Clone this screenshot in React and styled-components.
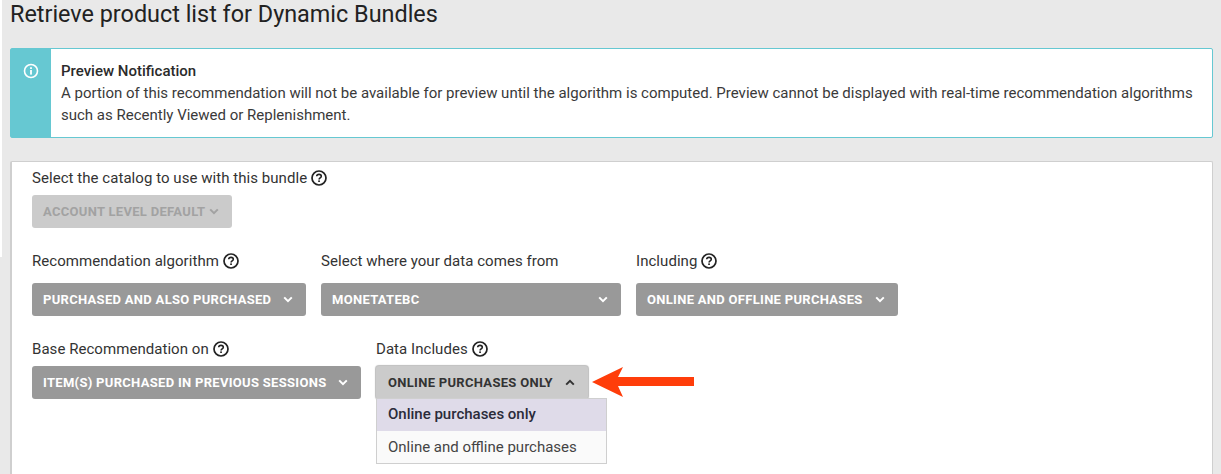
import React from 'react';
import styled, { createGlobalStyle } from 'styled-components';

const Global = createGlobalStyle`
  html, body {
    margin: 0;
    padding: 0;
    background: #e9e9e9;
    font-family: Roboto, "Liberation Sans", sans-serif;
    color: #333;
    overflow: hidden;
  }
`;

const Page = styled.div`
  height: 474px;
  box-sizing: border-box;
  padding: 0 8px 0 10px;
  overflow: hidden;
  background: linear-gradient(#fff, #fff) 0 0 / 2px 257px no-repeat;
`;

const Title = styled.h1`
  margin: 0;
  height: 48px;
  box-sizing: border-box;
  font-size: 23.4px;
  line-height: 28px;
  font-weight: 400;
  color: #222;
`;

const Notice = styled.div`
  display: flex;
  height: 90px;
  box-sizing: border-box;
  background: #fff;
  border: 1px solid #66c8d2;
  border-radius: 2px;
`;

const NoticeBand = styled.div`
  flex: 0 0 40px;
  background: #66c8d2;
  display: flex;
  justify-content: center;
  padding-top: 14px;
  box-sizing: border-box;
`;

const NoticeBody = styled.div`
  padding: 11px 10px 0 10px;
  font-size: 15px;
  line-height: 22px;
  color: #3a3a3a;
`;

const NoticeTitle = styled.div`
  font-weight: 500;
  color: #2b2b2b;
`;

const Card = styled.div`
  margin-top: 23px;
  background: #fff;
  border-top: 1px solid #cfcfcf;
  border-left: 2px solid #cfcfcf;
  border-right: 1px solid #cfcfcf;
  border-radius: 2px 2px 0 0;
  padding: 6px 20px 0 20px;
  height: 313px;
  box-sizing: border-box;
`;

const Row = styled.div`
  display: flex;
  gap: 15px;
  margin-bottom: ${p => p.$mb || 0}px;
`;

const Field = styled.div`
  position: relative;
`;

const Label = styled.div`
  display: flex;
  align-items: center;
  gap: 4px;
  height: 20px;
  font-size: 15px;
  line-height: 20px;
  letter-spacing: 0.05px;
  color: #333;
  margin-bottom: ${p => p.$mb || 7}px;
`;

const Select = styled.div`
  display: flex;
  align-items: center;
  justify-content: space-between;
  width: ${p => p.$width}px;
  height: 33px;
  box-sizing: border-box;
  padding: 0 13px 0 ${p => p.$open ? 12 : 11}px;
  border-radius: 3px;
  background: ${p => p.$open || p.$disabled ? '#cbcbcb' : '#999'};
  color: ${p => p.$open ? '#333' : p.$disabled ? '#a2a2a2' : '#fff'};
  font-size: 13px;
  font-weight: 700;
  letter-spacing: 0.3px;
  text-transform: uppercase;
  white-space: nowrap;
  box-shadow: ${p => p.$open ? '0 0 1px 1px #bdbdbd' : 'none'};
`;

const Menu = styled.div`
  position: absolute;
  left: 0;
  top: 59px;
  width: 231px;
  box-sizing: border-box;
  background: #fafafa;
  border: 1px solid #cfcfcf;
  z-index: 2;
`;

const MenuItem = styled.div`
  height: 32px;
  line-height: ${p => p.$active ? 30 : 32}px;
  padding: 0 11px;
  white-space: nowrap;
  font-size: 15px;
  color: ${p => p.$active ? '#2b2b3a' : '#444'};
  font-weight: ${p => p.$active ? 500 : 400};
  background: ${p => p.$active ? '#dfdbe9' : 'transparent'};
`;

const Arrow = styled.svg`
  position: absolute;
  left: 216px;
  top: 27px;
  z-index: 3;
`;

const InfoIcon = () => (
  <svg width="16" height="16" viewBox="0 0 16 16" fill="none">
    <circle cx="8" cy="8" r="6.5" stroke="#fff" strokeWidth="1.6" />
    <rect x="7.1" y="7" width="1.8" height="4.6" fill="#fff" />
    <rect x="7.1" y="4.2" width="1.8" height="1.8" fill="#fff" />
  </svg>
);

const HelpIcon = () => (
  <svg width="16" height="16" viewBox="0 0 16 16" fill="none">
    <circle cx="8" cy="8" r="7" stroke="#222" strokeWidth="1.7" />
    <path d="M5.7 6.3C5.8 5 6.8 4.4 8 4.4c1.3 0 2.3.8 2.3 1.9 0 1.7-2.2 1.6-2.2 3.2" stroke="#222" strokeWidth="1.6" />
    <rect x="7.2" y="10.4" width="1.7" height="1.6" fill="#222" />
  </svg>
);

const Chevron = ({ up, color = '#fff' }) => (
  <svg width="10" height="7" viewBox="0 0 10 7" fill="none">
    <path d={up ? 'M1.2 5.6L5 1.8l3.8 3.8' : 'M1.2 1.4L5 5.2l3.8-3.8'} stroke={color} strokeWidth="2" />
  </svg>
);

export default function App() {
  return (
    <Page>
      <Global />
      <Title>Retrieve product list for Dynamic Bundles</Title>
      <Notice>
        <NoticeBand><InfoIcon /></NoticeBand>
        <NoticeBody>
          <NoticeTitle>Preview Notification</NoticeTitle>
          A portion of this recommendation will not be available for preview until the algorithm is computed. Preview cannot be displayed with real-time recommendation algorithms such as Recently Viewed or Replenishment.
        </NoticeBody>
      </Notice>
      <Card>
        <Row $mb={23}>
          <Field>
            <Label>Select the catalog to use with this bundle <HelpIcon /></Label>
            <Select $disabled $width={200}>Account level default <Chevron color="#a2a2a2" /></Select>
          </Field>
        </Row>
        <Row $mb={23}>
          <Field>
            <Label $mb={12}>Recommendation algorithm <HelpIcon /></Label>
            <Select $width={274}>Purchased and also purchased <Chevron /></Select>
          </Field>
          <Field>
            <Label $mb={12}>Select where your data comes from</Label>
            <Select $width={300}>MonetateBC <Chevron /></Select>
          </Field>
          <Field>
            <Label $mb={12}>Including <HelpIcon /></Label>
            <Select $width={262}>Online and offline purchases <Chevron /></Select>
          </Field>
        </Row>
        <Row>
          <Field>
            <Label>Base Recommendation on <HelpIcon /></Label>
            <Select $width={329}>Item(s) purchased in previous sessions <Chevron /></Select>
          </Field>
          <Field>
            <Label>Data Includes <HelpIcon /></Label>
            <Select $open $width={212}>Online purchases only <Chevron up color="#333" /></Select>
            <Menu>
              <MenuItem $active>Online purchases only</MenuItem>
              <MenuItem>Online and offline purchases</MenuItem>
            </Menu>
            <Arrow width="103" height="32" viewBox="0 0 103 32">
              <path d="M0 16L31 1l-5 10h76v9H26l5 11z" fill="#ff3d0a" />
            </Arrow>
          </Field>
        </Row>
      </Card>
    </Page>
  );
}
